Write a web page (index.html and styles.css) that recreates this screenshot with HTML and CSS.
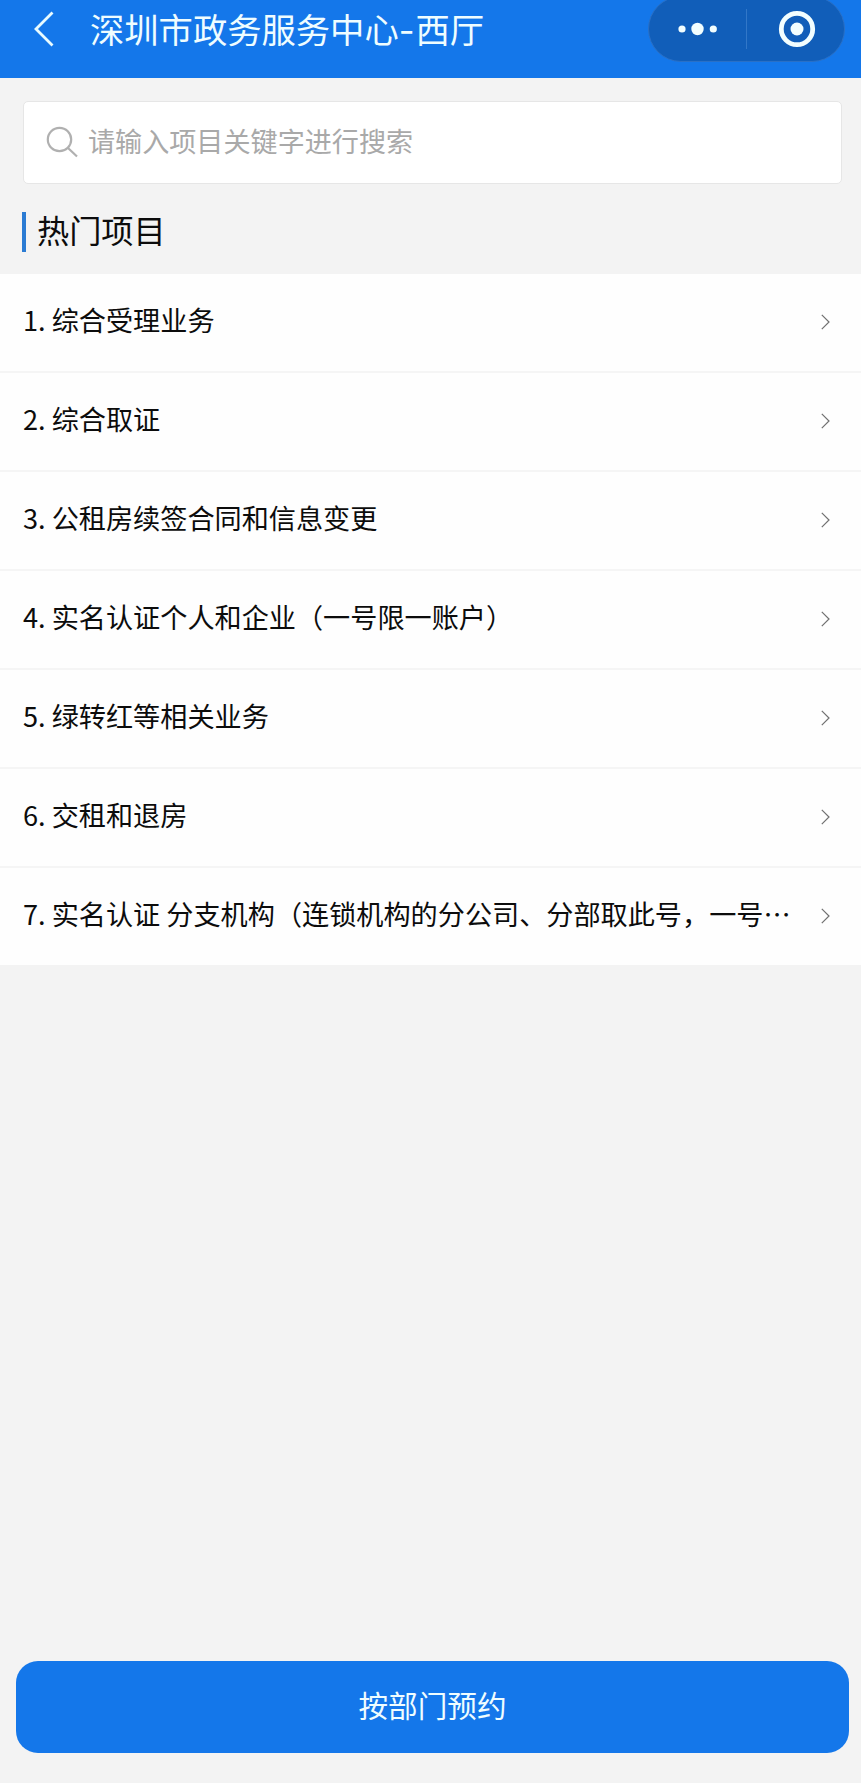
FILE: index.html
```html
<!DOCTYPE html>
<html lang="zh-CN">
<head>
  <meta charset="UTF-8">
  <meta name="viewport" content="width=device-width, initial-scale=1.0">
  <title>深圳市政务服务中心-西厅</title>
  <link rel="stylesheet" href="styles.css">
</head>
<body>
  <div class="page">
    <header class="navbar">
      <svg class="back-icon" viewBox="0 0 20 36"><path d="M18.5 1.5L2 18l16.500 16.500" /></svg>
      <h1 class="title">深圳市政务服务中心<span class="dash">-</span>西厅</h1>
      <div class="capsule">
        <svg class="more-icon" viewBox="0 0 40 14">
          <circle cx="4" cy="7" r="3.600" />
          <circle cx="19.500" cy="7" r="6.200" />
          <circle cx="35.300" cy="7" r="3.600" />
        </svg>
        <span class="divider"></span>
        <svg class="close-icon" viewBox="0 0 38 38">
          <circle class="ring" cx="19" cy="19" r="15.700" />
          <circle cx="19" cy="19" r="6.500" />
        </svg>
      </div>
    </header>

    <!-- Recherche -->
    <div class="search-box">
      <svg class="search-icon" viewBox="0 0 32 32">
        <circle cx="13.500" cy="13.500" r="11.700" />
        <path d="M21.500 21.500L31 30.500" />
      </svg>
      <span class="placeholder">请输入项目关键字进行搜索</span>
    </div>

    <h2 class="section-title">热门项目</h2>

    <!-- Liste -->
    <ul class="list">
      <li class="item">
        <span class="item-name">1. 综合受理业务</span>
        <svg class="arrow" viewBox="0 0 9 16"><path d="M.8.8L8 8 .8 15.200" /></svg>
      </li>
      <li class="item">
        <span class="item-name">2. 综合取证</span>
        <svg class="arrow" viewBox="0 0 9 16"><path d="M.8.8L8 8 .8 15.200" /></svg>
      </li>
      <li class="item">
        <span class="item-name">3. 公租房续签合同和信息变更</span>
        <svg class="arrow" viewBox="0 0 9 16"><path d="M.8.8L8 8 .8 15.200" /></svg>
      </li>
      <li class="item">
        <span class="item-name">4. 实名认证个人和企业（一号限一账户）</span>
        <svg class="arrow" viewBox="0 0 9 16"><path d="M.8.8L8 8 .8 15.200" /></svg>
      </li>
      <li class="item">
        <span class="item-name">5. 绿转红等相关业务</span>
        <svg class="arrow" viewBox="0 0 9 16"><path d="M.8.8L8 8 .8 15.200" /></svg>
      </li>
      <li class="item">
        <span class="item-name">6. 交租和退房</span>
        <svg class="arrow" viewBox="0 0 9 16"><path d="M.8.8L8 8 .8 15.200" /></svg>
      </li>
      <li class="item">
        <span class="item-name">7. 实名认证 分支机构（连锁机构的分公司、分部取此号，一号…</span>
        <svg class="arrow" viewBox="0 0 9 16"><path d="M.8.8L8 8 .8 15.200" /></svg>
      </li>
    </ul>

    <button class="submit-button" type="button">按部门预约</button>
  </div>
</body>
</html>
```
FILE: styles.css
```css
body, html {
  margin: 0;
  padding: 0;
}

* {
  box-sizing: border-box;
}

body {
  background-color: #f3f3f3;
  color: #0c0c0c;
  font-family: "Noto Sans CJK SC", sans-serif;
}

svg {
  flex: none;
  fill: none;
}

.page {
  display: flex;
  flex-direction: column;
  height: 1783px;
  overflow: hidden;
}

.navbar {
  display: flex;
  flex: none;
  align-items: center;
  height: 78px;
  padding: 0 16px 20px 34px;
  background-color: #1477ea;
}

.back-icon {
  width: 20px;
  height: 36px;
  stroke: #e8fbff;
  stroke-width: 2.8;
}

.title {
  flex: 1;
  margin: 0 0 0 36px;
  color: #effdff;
  font-size: 34.3px;
  font-weight: 400;
  line-height: 50px;
  white-space: nowrap;
}

.dash {
  margin-right: 1px;
  font-family: Inter, sans-serif;
}

.capsule {
  display: flex;
  align-items: center;
  width: 197px;
  height: 66px;
  padding-left: 29px;
  margin: -4px 0;
  background-color: #115eb9;
  border: 1px solid #2a70c6;
  border-radius: 33px;
}

.more-icon {
  width: 40px;
  height: 14px;
  fill: #f2feff;
}

.divider {
  width: 1px;
  height: 40px;
  margin: 0 31px 0 28px;
  background-color: #3277c8;
}

.close-icon {
  width: 38px;
  height: 38px;
  fill: #f2feff;
}

.ring {
  fill: none;
  stroke: #f2feff;
  stroke-width: 4.8;
}

.search-box {
  display: flex;
  flex: none;
  align-items: center;
  height: 83px;
  margin: 23px 19px 0 23px;
  padding-left: 22px;
  background-color: #fff;
  border: 1px solid #e6e6e6;
  border-radius: 5px;
}

.search-icon {
  width: 32px;
  height: 32px;
  margin-bottom: 2px;
  stroke: #b0b0b0;
  stroke-width: 2.2;
}

.placeholder {
  margin: 0 0 4px 10px;
  color: #a9a9a9;
  font-size: 27.1px;
  line-height: 40px;
}

.section-title {
  height: 40px;
  margin: 28px 0 22px 22px;
  padding-left: 11px;
  border-left: 4px solid #2b7bd3;
  font-size: 32.2px;
  font-weight: 400;
  line-height: 35px;
}

.list {
  margin: 0;
  padding: 0;
  list-style: none;
  background-color: #fefefe;
}

.item {
  display: flex;
  align-items: center;
  justify-content: space-between;
  height: 99px;
  padding: 0 31px 0 23px;
  border-bottom: 2px solid #f5f5f5;
}

.item:last-child {
  height: 97px;
  border-bottom: none;
}

.item-name {
  margin-bottom: 5px;
  font-size: 27.15px;
  line-height: 40px;
  white-space: nowrap;
}

.arrow {
  width: 9px;
  height: 16px;
  margin-bottom: 2px;
  stroke: #707070;
  stroke-width: 1.2;
}

.submit-button {
  height: 92px;
  margin: auto 12px 30px 16px;
  padding: 0 0 6px;
  background-color: #1477ea;
  color: #effdff;
  border: none;
  border-radius: 22px;
  font-family: inherit;
  font-size: 29.6px;
}
```
